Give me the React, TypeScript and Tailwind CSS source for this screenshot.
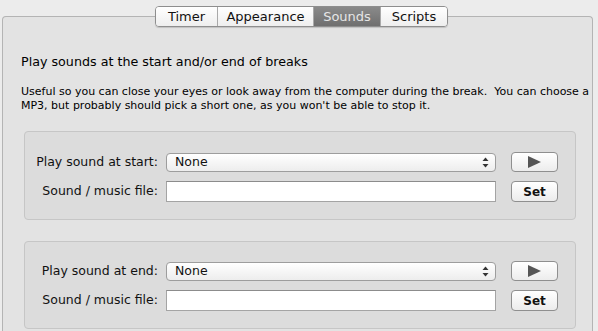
import { ReactNode } from 'react'

const tabs = [
  { label: 'Timer', w: 'w-[61px]' },
  { label: 'Appearance', w: 'w-[96px]' },
  { label: 'Sounds', w: 'w-[67px]', active: true },
  { label: 'Scripts', w: 'w-[67px]' },
]

function Popup() {
  return (
    <div className="flex h-[19px] w-[330px] items-center justify-between rounded-[4px] border border-[#9d9d9d] bg-gradient-to-b from-white to-[#ededed] pl-[8px] pr-[6px]">
      <span className="text-[12.5px] leading-none text-[#111]">None</span>
      <svg width="7" height="11" viewBox="0 0 7 11">
        <path d="M3.5 0.5 L6.5 4 L0.5 4 Z" fill="#333" />
        <path d="M3.5 10.5 L6.5 7 L0.5 7 Z" fill="#333" />
      </svg>
    </div>
  )
}

function Field() {
  return <div className="h-[21px] w-[330px] border border-[#a4a4a4] border-t-[#8c8c8c] bg-white" />
}

function Btn({ children, h }: { children: ReactNode; h: string }) {
  return (
    <div
      className={`flex ${h} w-[47px] items-center justify-center rounded-[4px] border border-[#8f8f8f] bg-gradient-to-b from-white to-[#ececec] text-[12px] font-bold text-[#111]`}
    >
      {children}
    </div>
  )
}

function Play() {
  return (
    <svg width="15" height="12" viewBox="0 0 15 12">
      <path d="M1 0 L14 6 L1 12 Z" fill="#555" />
    </svg>
  )
}

function Row({ label, children }: { label: string; children: ReactNode }) {
  return (
    <div className="flex items-center">
      <div className="w-[141px] pr-[8px] text-right text-[12.5px] leading-none text-[#111]">{label}</div>
      {children}
    </div>
  )
}

function Group({ which, pt, h }: { which: string; pt: string; h: string }) {
  return (
    <div className={`ml-[21px] flex ${h} w-[552px] flex-col rounded-[4px] border border-[#c6c6c6] bg-[#dcdcdc] ${pt}`}>
      <Row label={which}>
        <Popup />
        <div className="ml-[15px]">
          <Btn h="h-[20px]">
            <Play />
          </Btn>
        </div>
      </Row>
      <div className="mt-[9px]">
        <Row label="Sound / music file:">
          <Field />
          <div className="ml-[15px]">
            <Btn h="h-[21px]">Set</Btn>
          </div>
        </Row>
      </div>
    </div>
  )
}

export default function App() {
  return (
    <div
      className="relative h-[331px] w-[598px] overflow-hidden bg-[#ececec] pl-[2px] pt-[16px] text-black"
      style={{ fontFamily: '"Lucida Grande", "DejaVu Sans", sans-serif' }}
    >
      <div className="h-[330px] w-[591px] rounded-t-[4px] border border-[#b4b4b4] border-b-0 bg-[#e3e3e3] pt-[37px]">
        <div className="pl-[18px] text-[12.7px] leading-[16px]">Play sounds at the start and/or end of breaks</div>
        <div className="mt-[15px] whitespace-nowrap pl-[18px] text-[11px] leading-[14px]">
          Useful so you can close your eyes or look away from the computer during the break.&nbsp; You can choose a
          <br />
          MP3, but probably should pick a short one, as you won't be able to stop it.
        </div>
        <div className="mt-[18px]">
          <Group which="Play sound at start:" pt="pt-[20px]" h="h-[89px]" />
        </div>
        <div className="mt-[21px]">
          <Group which="Play sound at end:" pt="pt-[19px]" h="h-[88px]" />
        </div>
      </div>

      {/* segmented tab control over the panel edge */}
      <div className="absolute left-[155px] top-[6px] flex h-[21px] overflow-hidden rounded-[4px] border border-[#8e8e8e] shadow-[0_1px_1px_rgba(0,0,0,0.15)]">
        {tabs.map((t, i) => (
          <div
            key={t.label}
            className={`flex ${t.w} items-center justify-center text-[13px] ${
              t.active
                ? 'bg-gradient-to-b from-[#8a8a8a] to-[#6f6f6f] text-[#e6e6e6]'
                : 'bg-gradient-to-b from-white to-[#eeeeee] text-[#111]'
            } ${i > 0 ? 'border-l border-[#a9a9a9]' : ''}`}
          >
            {t.label}
          </div>
        ))}
      </div>
    </div>
  )
}
